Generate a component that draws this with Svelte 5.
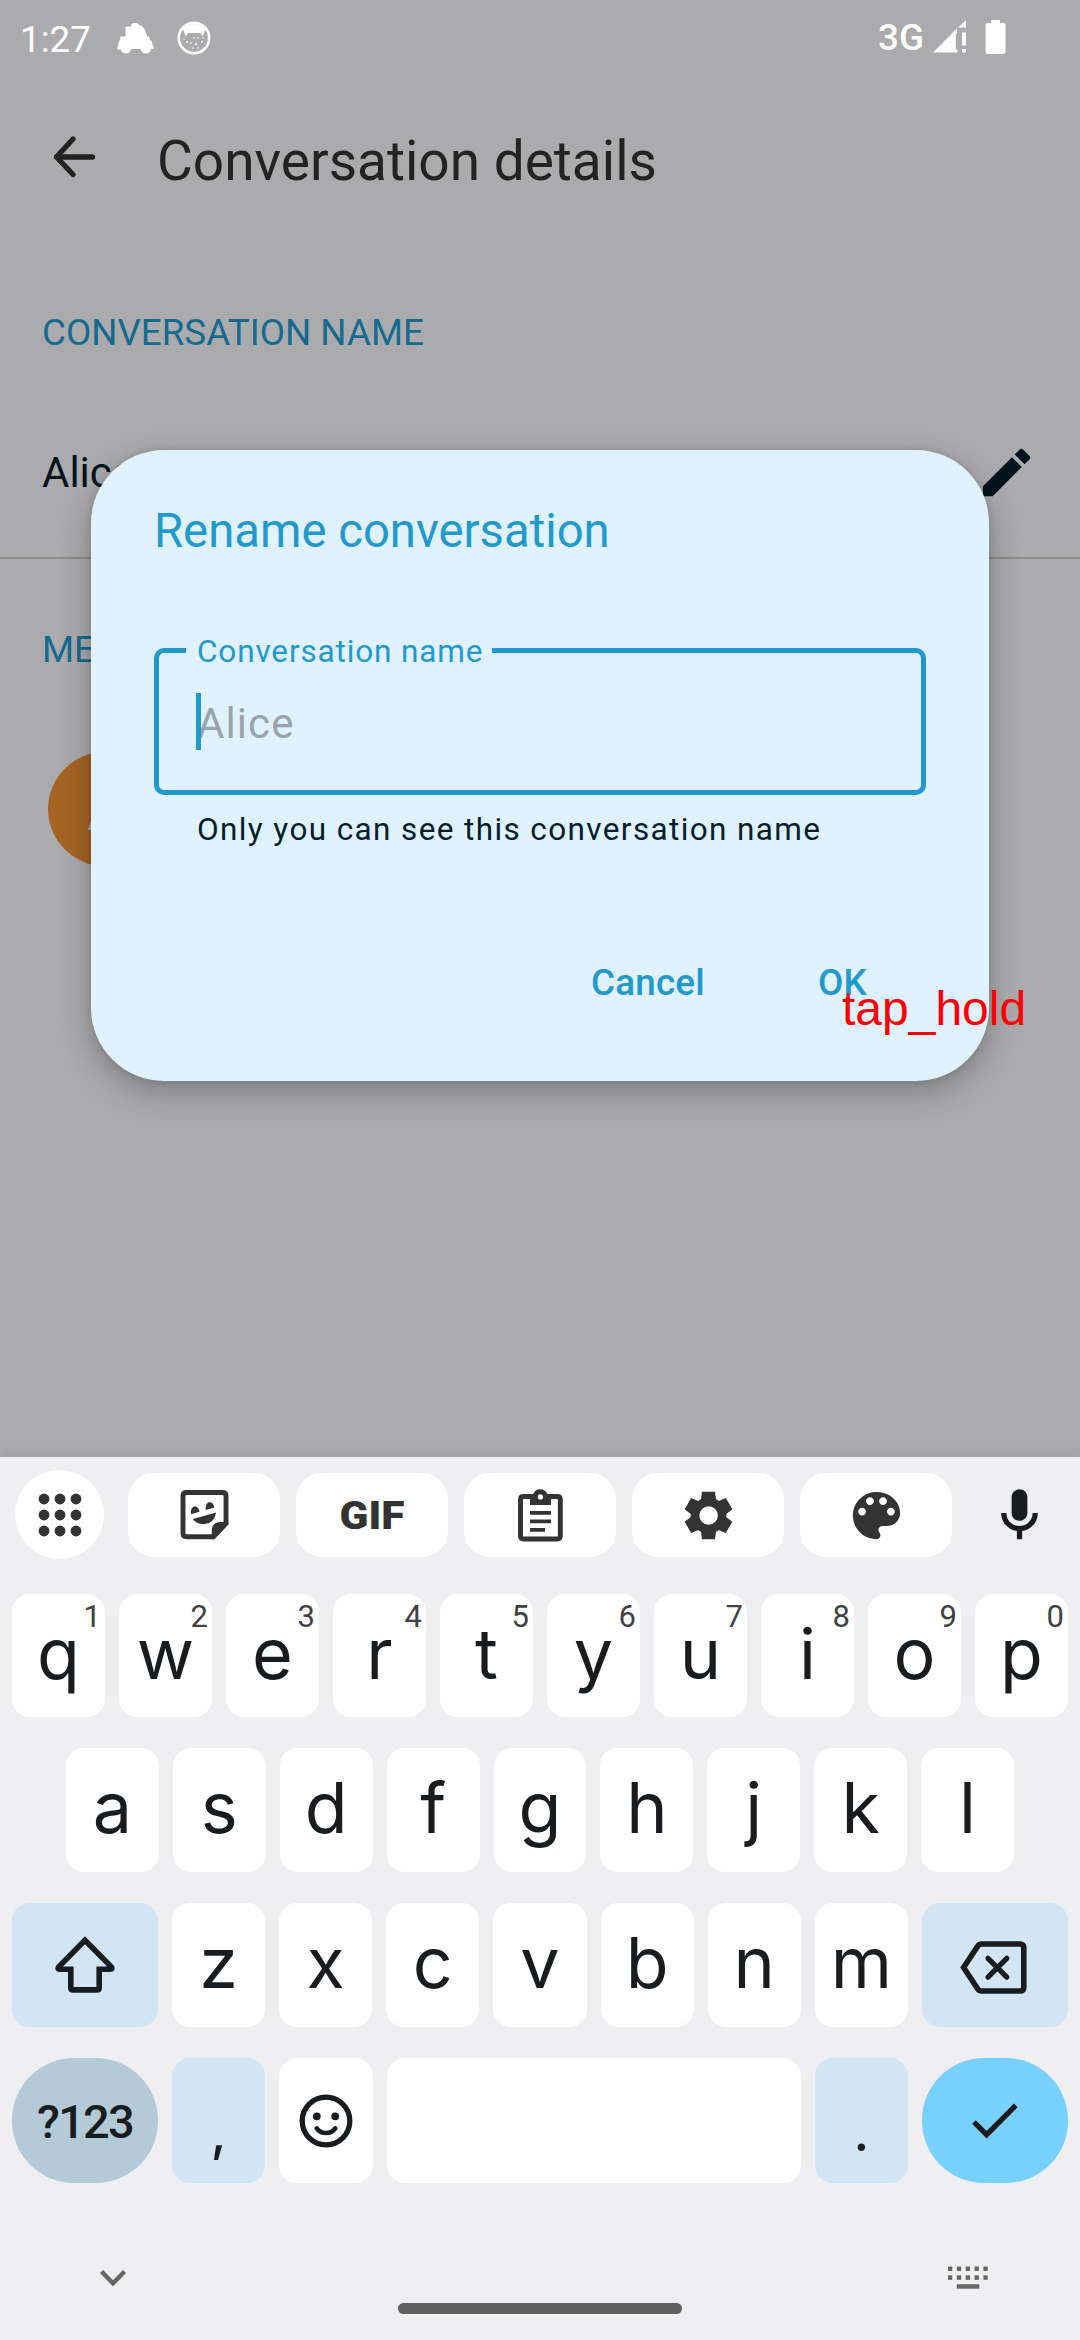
<script>
  const topRow = [...'qwertyuiop'].map((c, i) => ({ c, n: (i + 1) % 10 }));
  const midRow = [...'asdfghjkl'];
  const lowRow = [...'zxcvbnm'];
  const dots = [0, 1, 2, 3, 4, 5, 6, 7, 8];
  const cells = [0, 1, 2, 3, 4];
</script>

<div class="phone">
  <div class="screen">
    <div class="status">
      <span class="clock">1:27</span>
      <svg class="s-car" width="38" height="31" viewBox="0 0 38 31"><path fill="#fff" d="M8.500 3.500h5l1-2.500 2-1h4l2 2.500h2l3 3.500 2 5 .5 2.500h2l1 4h1.500l1 4.500 1.500 2.500-.5 1.500h-2.500q-1 4.500-5.500 4.500-3.500 0-5-4.500H14q-1 4.500-5.500 4.500Q5 30.500 3.500 26.500H.5V24l1.500-5.500L3 17l.5-3.500h5z"/></svg>
      <svg class="s-face" width="34" height="34" viewBox="0 0 34 34"><circle cx="17" cy="17" r="15.200" fill="none" stroke="#fff" stroke-width="2.600"/><path fill="#fff" d="M6 8Q10 3 17 3t11 5l-1 5-1.500 2-2.500-3H11l-2 3.500L7.500 12z"/><g fill="#fff"><circle cx="10" cy="21" r=".9"/><circle cx="17" cy="17" r=".8"/><circle cx="19" cy="23" r="1.100"/><circle cx="25" cy="21" r=".9"/><circle cx="14" cy="22" r=".8"/><circle cx="21" cy="17" r=".8"/><circle cx="16" cy="27" r=".8"/><circle cx="21" cy="27" r=".8"/><circle cx="26" cy="17" r=".8"/><circle cx="7" cy="18" r=".7"/></g></svg>
      <span class="net">3G</span>
      <svg class="s-sig" width="34" height="33" viewBox="0 0 34 33"><path fill="#fff" d="M0 32.500 24 8.500V13l-1.200 2V29.500h1.700v3zM25 7.500 33 0v7.500zM29 12.500h4V25.500h-4zM29 29h4v3.500h-4z"/></svg>
      <svg class="s-bat" width="21" height="34" viewBox="0 0 21 34"><path fill="#fff" d="M6 0h9v3h3.500Q20.500 3 20.500 5v27q0 2-2 2h-16Q.5 34 .5 32V5q0-2 2-2H6z"/></svg>
    </div>
    <div class="header">
      <svg class="back" width="44" height="44" viewBox="0 0 44 44"><path d="M21 4 4.500 22 21 39.500M4.500 22H40.500" fill="none" stroke="#232323" stroke-width="5.300" stroke-linecap="round" stroke-linejoin="round"/></svg>
      <h1>Conversation details</h1>
    </div>
    <div class="label">CONVERSATION NAME</div>
    <div class="name">
      <span>Alice</span>
      <svg width="63" height="63" viewBox="0 0 24 24"><path fill="#00141b" d="M3 17.250V21h3.750L17.810 9.940l-3.750-3.750L3 17.250zM20.710 7.040c.39-.39.39-1.020 0-1.410l-2.340-2.340c-.39-.39-1.020-.39-1.410 0l-1.830 1.830 3.750 3.750 1.830-1.830z"/></svg>
    </div>
    <div class="label members">MEMBERS</div>
    <div class="member"><div class="avatar">A</div></div>
  </div>

  <div class="dialog">
    <h2>Rename conversation</h2>
    <div class="field">
      <span class="float">Conversation name</span>
      <span class="hint">Alice</span>
      <i class="caret"></i>
    </div>
    <div class="help">Only you can see this conversation name</div>
    <div class="actions"><span>Cancel</span><span>OK</span></div>
  </div>
  <div class="tap">tap_hold</div>

  <div class="keyboard">
    <div class="tools">
      <div class="round">
        <svg width="46" height="46" viewBox="0 0 46 46" fill="#333">{#each dots as d}<circle cx={7 + (d % 3) * 16} cy={7 + Math.floor(d / 3) * 16} r="5.400" />{/each}</svg>
      </div>
      <div class="chips">
        <div class="chip">
          <svg width="49" height="50" viewBox="0 0 49 50"><path d="M33.500 46.800H6.500q-3.500 0-3.500-3.500V6q0-3.500 3.500-3.500h36Q46 2.500 46 6V33.500" fill="none" stroke="#333" stroke-width="4.900"/><path fill="#333" d="M31.800 49.200V41q0-9 9-9h7.700v2.500L34.500 49.200zM11 24.300C9.700 15 18.500 14 19.500 21.800zM25.800 20C24.500 10.500 33.500 10 34.300 17.600zM12.800 29l23.400-6.500Q34 34 23.500 34.200 16 34 12.800 29z"/></svg>
        </div>
        <div class="chip">
          <svg width="80" height="56" viewBox="0 0 80 56"><text class="gif" x="7.500" y="41.500" textLength="65" lengthAdjust="spacingAndGlyphs">GIF</text></svg>
        </div>
        <div class="chip">
          <svg width="45" height="53" viewBox="0 0 45 53"><path d="M13 7.500H5.500q-3 0-3 3V47q0 3 3 3H39.300q3 0 3-3V10.500q0-3-3-3H32" fill="none" stroke="#333" stroke-width="4.900"/><path fill="#333" fill-rule="evenodd" d="M12 5h3.300C17-1.300 27.500-1.300 29.300 5H33v11H12zM22.400 5.300a2.600 2.600 0 1 0 0 5.200 2.600 2.600 0 0 0 0-5.200zM12 22h21v3.800H12zM12 30.500h21v3.800H12zM12 39h15v3.800H12z"/></svg>
        </div>
        <div class="chip">
          <svg width="57" height="57" viewBox="0 0 24 24"><path fill="#333" d="m9.250 22-.4-3.200q-.325-.125-.612-.3-.288-.175-.563-.375L4.700 19.375l-2.750-4.750 2.575-1.950Q4.500 12.500 4.500 12.338v-.675q0-.163.025-.338L1.950 9.375l2.750-4.750 2.975 1.250q.275-.2.575-.375.3-.175.6-.3l.4-3.200h5.500l.4 3.200q.325.125.613.3.287.175.562.375l2.975-1.250 2.750 4.750-2.575 1.950q.025.175.025.338v.674q0 .163-.05.338l2.575 1.950-2.750 4.750-2.950-1.250q-.275.2-.575.375-.3.175-.6.3l-.4 3.200Zm2.800-6.100q1.600 0 2.750-1.150T15.950 12q0-1.600-1.150-2.750T12.050 8.100q-1.650 0-2.775 1.150T8.150 12q0 1.600 1.125 2.750t2.775 1.150Z"/></svg>
        </div>
        <div class="chip">
          <svg width="63" height="63" viewBox="0 0 24 24"><path fill="#333" d="M12 3c-4.970 0-9 4.030-9 9s4.030 9 9 9c.83 0 1.500-.67 1.500-1.500 0-.39-.15-.74-.39-1.010-.23-.26-.38-.61-.38-.99 0-.83.67-1.500 1.500-1.500H16c2.760 0 5-2.240 5-5 0-4.420-4.030-8-9-8zm-5.500 9c-.83 0-1.500-.67-1.500-1.500S5.670 9 6.500 9 8 9.670 8 10.500 7.330 12 6.500 12zm3-4C8.670 8 8 7.330 8 6.500S8.670 5 9.500 5s1.500.67 1.500 1.500S10.330 8 9.500 8zm5 0c-.83 0-1.500-.67-1.500-1.500S13.670 5 14.500 5s1.500.67 1.500 1.500S15.330 8 14.500 8zm3 4c-.83 0-1.500-.67-1.500-1.500S16.670 9 17.500 9s1.500.67 1.500 1.500-.67 1.500-1.500 1.500z"/></svg>
        </div>
      </div>
      <svg class="mic" width="63" height="63" viewBox="0 0 24 24"><path fill="#191c1e" d="M12 14c1.660 0 3-1.340 3-3V5c0-1.660-1.340-3-3-3S9 3.340 9 5v6c0 1.660 1.340 3 3 3zm5-3c0 2.760-2.240 5-5 5s-5-2.240-5-5H5c0 3.530 2.610 6.430 6 6.920V21h2v-3.080c3.390-.49 6-3.390 6-6.920h-2z"/></svg>
    </div>

    <div class="row first">
      {#each topRow as k}<div class="key"><span>{k.c}</span><sup>{k.n}</sup></div>{/each}
    </div>
    <div class="row second">
      {#each midRow as c}<div class="key"><span>{c}</span></div>{/each}
    </div>
    <div class="row">
      <div class="key wide tint">
        <svg width="60" height="58" viewBox="0 0 60 58"><path fill="none" stroke="#191c1e" stroke-width="5.600" stroke-miterlimit="10" d="M30 4.200 4 30.500Q1.800 33.200 5 33.200H15.800V51.700q0 2.200 2.200 2.200H42q2.200 0 2.200-2.200V33.200H55Q58.200 33.200 56 30.500Z"/></svg>
      </div>
      {#each lowRow as c}<div class="key"><span>{c}</span></div>{/each}
      <div class="key wide tint">
        <svg class="del" width="67" height="53" viewBox="0 0 67 53"><path fill="none" stroke="#191c1e" stroke-width="5.600" d="M21.500 3H60q3.800 0 3.800 3.800V46.200q0 3.800-3.800 3.800H21.500q-2.300 0-3.700-2L3.600 26.500 17.800 5Q19.200 3 21.500 3Z"/><path stroke="#191c1e" stroke-width="5.200" stroke-linecap="round" d="m28 17.300 18.800 18.800M46.800 17.300 28 36.100"/></svg>
      </div>
    </div>
    <div class="row last">
      <div class="key wide sym">?123</div>
      <div class="key tint"><b>,</b></div>
      <div class="key">
        <svg width="54" height="54" viewBox="-27 -27 54 54"><circle r="23.800" fill="none" stroke="#191c1e" stroke-width="5.300"/><circle cx="-9.200" cy="-4.700" r="3.900" fill="#191c1e"/><circle cx="9.200" cy="-4.700" r="3.900" fill="#191c1e"/><path d="M-9.300 7.400Q-6 12 0 12t9.300-4.600" fill="none" stroke="#191c1e" stroke-width="4.500" stroke-linecap="round"/></svg>
      </div>
      <div class="key space"></div>
      <div class="key tint"><b>.</b></div>
      <div class="key wide enter">
        <svg width="50" height="38" viewBox="0 0 50 38"><path d="M4 20 16.600 32.700 45.800 3.400" fill="none" stroke="#191c1e" stroke-width="5.300"/></svg>
      </div>
    </div>

    <div class="nav">
      <svg width="28" height="18" viewBox="0 0 28 18"><path d="M2.500 2.500 14 14.300 25.500 2.500" fill="none" stroke="#666" stroke-width="4.400"/></svg>
      <svg width="42" height="24" viewBox="0 0 42 24" fill="#666">{#each cells as c}<rect x={1 + c * 8.85} y="0.500" width="4.300" height="4.500"/><rect x={1 + c * 8.85} y="9.300" width="4.300" height="4.500"/>{/each}<rect x="9.800" y="18.200" width="22.500" height="4.500"/></svg>
    </div>
    <div class="handle"></div>
  </div>
</div>

<style>
  :global(body) { margin: 0; }
  .phone { position: relative; width: 1080px; height: 2340px; overflow: hidden; background: #ababad; font-family: Roboto, sans-serif; display: flex; flex-direction: column; }
  svg { display: block; flex: none; }
  .screen { height: 1457px; flex: none; }
  .status { height: 79px; display: flex; align-items: flex-start; padding-left: 20px; color: #fff; font-size: 36.75px; line-height: 79px; }
  .clock { width: 97px; }
  .s-car { margin-top: 23px; margin-right: 22px; }
  .s-face { margin-top: 21px; }
  .net { margin-left: auto; font-weight: 500; line-height: 76px; margin-right: 9px; }
  .s-sig { margin-top: 20px; margin-right: 18px; }
  .s-bat { margin-top: 20px; margin-right: 74px; }
  .header { height: 160px; display: flex; align-items: flex-start; color: #232323; }
  .back { margin: 56px 61px 0 52px; }
  h1 { margin: 2px 0 0; font-weight: 400; font-size: 55px; line-height: 160px; }
  .label { box-sizing: border-box; height: 148px; padding: 40px 0 0 42px; line-height: 108px; font-size: 36.75px; color: #166a8e; }
  .members { padding-top: 33px; line-height: 115px; }
  .name { height: 170px; border-bottom: 2px solid #8b8b8c; display: flex; align-items: center; justify-content: space-between; padding: 0 42px; font-size: 42px; color: #00141b; }
  .member { padding: 45px 0 0 48px; }
  .avatar { width: 114px; height: 114px; border-radius: 50%; background: #a56424; color: #ababad; font-size: 55px; line-height: 118px; text-align: center; }

  .dialog { position: absolute; left: 91px; top: 450px; width: 898px; height: 631px; box-sizing: border-box; padding: 46px 63px 0; border-radius: 73px; background: #e0f2ff; box-shadow: 0 12px 32px rgba(0,0,0,.26), 0 0 8px rgba(0,0,0,.12); color: #2199cd; }
  h2 { margin: 0; font-weight: 400; font-size: 47.25px; line-height: 70px; }
  .field { position: relative; box-sizing: border-box; margin-top: 82px; height: 147px; border: 5px solid #2199cd; border-radius: 10px; }
  .float { position: absolute; left: 27px; top: -25px; width: 306px; box-sizing: border-box; padding-left: 11px; background: #e0f2ff; font-size: 31.5px; line-height: 48px; letter-spacing: .86px; white-space: nowrap; }
  .hint { display: block; padding-left: 38px; line-height: 142px; font-size: 42px; letter-spacing: 1.1px; color: #99a3ab; }
  .caret { position: absolute; left: 37px; top: 40px; width: 5px; height: 57px; background: #2199cd; }
  .help { margin-top: 10px; padding-left: 43px; font-size: 31.5px; line-height: 50px; letter-spacing: 1.38px; color: #001e2b; white-space: nowrap; }
  .actions { display: flex; justify-content: flex-end; gap: 113px; margin-top: 98px; padding-right: 59px; font-weight: 500; font-size: 36.75px; line-height: 60px; letter-spacing: .26px; }
  .tap { position: absolute; left: 842px; top: 979px; font: 48px/60px "Liberation Sans", sans-serif; color: red; }

  .keyboard { height: 883px; flex: none; position: relative; background: #efeff1; box-shadow: 0 -2px 14px rgba(0,0,0,.08); font-family: Inter, sans-serif; color: #191c1e; }
  .tools { height: 137px; display: flex; box-sizing: border-box; padding: 13px 0 0 15px; }
  .round { width: 89px; height: 89px; border-radius: 50%; background: #fff; display: flex; align-items: center; justify-content: center; margin-right: 24px; }
  .chips { display: flex; gap: 16px; padding-top: 3px; }
  .chip { width: 152px; height: 84px; border-radius: 26px; background: #fff; display: flex; align-items: center; justify-content: center; }
  .gif { font: 900 38.500px Roboto, sans-serif; fill: #333; }
  .mic { margin: 13.500px 0 0 36px; }
  .row { display: flex; gap: 14px; padding: 0 12px; margin-bottom: 31px; height: 124px; }
  .row.first { height: 123px; }
  .row.second { padding: 0 66px; }
  .row.last { height: 125px; margin-bottom: 0; }
  .key { position: relative; flex: 1 1 0; border-radius: 18px; background: #fff; display: flex; align-items: center; justify-content: center; }
  .key.wide { flex: 0 0 146px; }
  .row.last .key { flex: 0 0 93.300px; }
  .row.last .key.wide { flex: 0 0 146px; }
  .row.last .key.space { flex: 1 1 0; }
  .key span { align-self: flex-start; font-size: 70px; line-height: 120px; }
  sup { position: absolute; right: 4px; top: 2.500px; font: 400 31px/40px Roboto, sans-serif; color: #3f4144; }
  .key.tint { background: #d2e5f4; }
  .row.last .key.sym { background: #b4cad7; border-radius: 62px; font: 500 47px/60px Roboto, sans-serif; letter-spacing: -1.800px; box-sizing: border-box; padding-top: 2px; }
  .row.last .key.enter { background: #77d0ff; border-radius: 62px; }
  b { align-self: flex-start; font-weight: 500; font-size: 52px; line-height: 150px; }
  .del { margin: 5px 0 0 -3px; }
  .nav { display: flex; justify-content: space-between; align-items: flex-start; padding: 83px 91px 0 99px; }
  .nav svg:first-child { margin-top: 3px; }
  .handle { width: 284px; height: 11px; margin: 13px auto 0; border-radius: 5.500px; background: #5f5f5f; }
</style>
